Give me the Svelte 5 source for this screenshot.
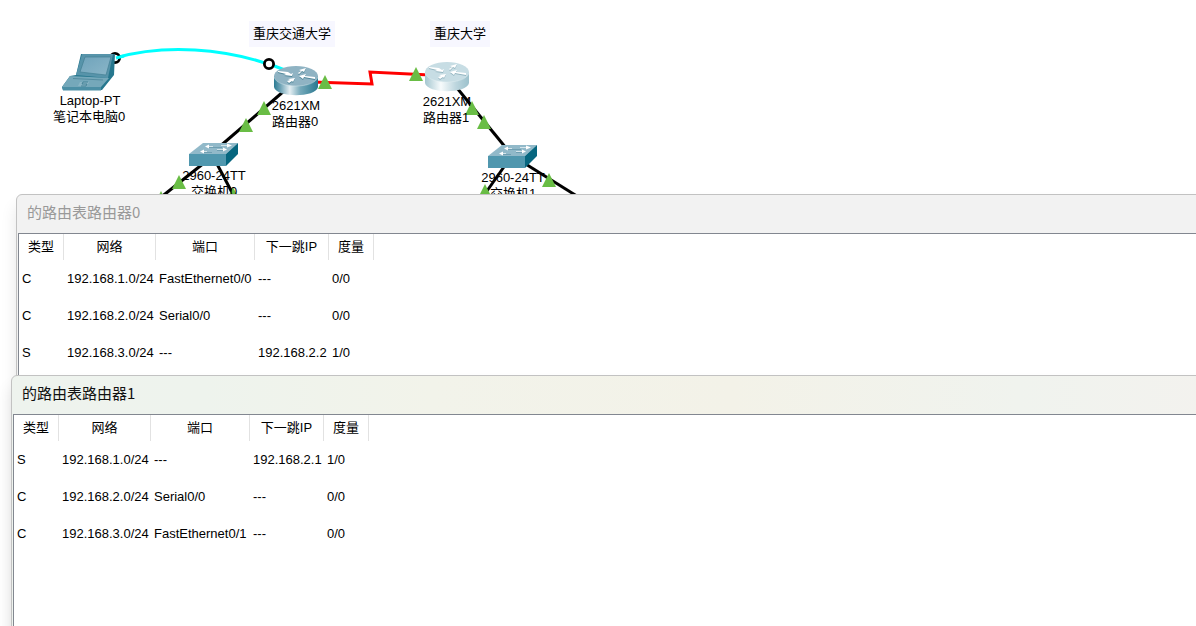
<script>
  const columns = ['类型', '网络', '端口', '下一跳IP', '度量'];

  const windows = [
    {
      id: 'router0',
      title: '的路由表路由器0',
      active: false,
      rows: [
        ['C', '192.168.1.0/24', 'FastEthernet0/0', '---', '0/0'],
        ['C', '192.168.2.0/24', 'Serial0/0', '---', '0/0'],
        ['S', '192.168.3.0/24', '---', '192.168.2.2', '1/0'],
      ],
    },
    {
      id: 'router1',
      title: '的路由表路由器1',
      active: true,
      rows: [
        ['S', '192.168.1.0/24', '---', '192.168.2.1', '1/0'],
        ['C', '192.168.2.0/24', 'Serial0/0', '---', '0/0'],
        ['C', '192.168.3.0/24', 'FastEthernet0/1', '---', '0/0'],
      ],
    },
  ];

  // Black copper links between devices: x1, y1, x2, y2
  const links = [
    [284, 91, 218, 148],
    [457, 88, 506, 148],
    [204, 163, 160, 198],
    [217, 164, 236, 200],
    [506, 164, 482, 198],
    [524, 163, 580, 198],
  ];

  // Apex of each link status arrow
  const arrows = [
    [325, 75], [416, 67], [264, 101], [246, 118], [472, 101], [484, 115],
    [179, 175], [161, 191], [233, 187], [485, 184], [549, 173],
  ];

  const routers = [
    { x: 296, y: 75, top: '#8fb3c3', body: 'url(#steel)', shade: '#4f8699', name: '路由器0' },
    { x: 447, y: 71, top: '#c7dde4', body: 'url(#pale)', shade: '#93b5c0', name: '路由器1' },
  ];

  const routerArrows =
    'M-18-5 L-8-4 L-5-2 L-3-3 L-4 0 L-12-1 L-10-2 L-18-4Z ' +
    'M2-3 L5-5 L3-6 L10-8 L8-4 L6-5 L3-2Z ' +
    'M3 0 L10-2 L9 0 L19 1 L19 3 L8 1 L7 3Z ' +
    'M-9 5 L-6 4 L-8 3 L-1 2 L-3 6 L-4 5 L-7 7Z';

  const switches = [
    { x: 189, y: 143, name: '交换机0' },
    { x: 488, y: 145, name: '交换机1' },
  ];

  const notes = [
    { x: 249, width: 86, text: '重庆交通大学' },
    { x: 430, width: 60, text: '重庆大学' },
  ];
</script>

<main class="desktop">
  <svg class="topology" width="1196" height="220" viewBox="0 0 1196 220" role="group">
    <defs>
      <linearGradient id="steel">
        <stop offset="0" stop-color="#2b7b93" />
        <stop offset=".14" stop-color="#6ba1b4" />
        <stop offset=".36" stop-color="#e4eef2" />
        <stop offset=".6" stop-color="#75a9ba" />
        <stop offset="1" stop-color="#2a7890" />
      </linearGradient>
      <linearGradient id="pale">
        <stop offset="0" stop-color="#a4c6d0" />
        <stop offset=".36" stop-color="#f7fbfc" />
        <stop offset=".7" stop-color="#bdd6de" />
        <stop offset="1" stop-color="#9cc1cc" />
      </linearGradient>
      <linearGradient id="screen" x1="0" y1="0" x2="1" y2="1">
        <stop offset="0" stop-color="#6fa3bb" />
        <stop offset="1" stop-color="#8bb6c8" />
      </linearGradient>
    </defs>

    {#each notes as note}
      <rect x={note.x} y="21" width={note.width} height="26" fill="#f7f7ff" />
      <text x={note.x + note.width / 2} y="38">{note.text}</text>
    {/each}

    {#each links as [x1, y1, x2, y2]}
      <line {x1} {y1} {x2} {y2} stroke="#000" stroke-width="3" />
    {/each}
    <path d="M312 82 L372 84 L370 72 L430 75" fill="none" stroke="#f00" stroke-width="3" />
    <path d="M115 58 C160 45 225 45 290 72" fill="none" stroke="#0ff" stroke-width="3" />
    <circle cx="115" cy="58" r="4.6" fill="#fff" stroke="#000" stroke-width="2.8" />
    <path d="M116 58 L124 56" stroke="#0ff" stroke-width="3" />
    <circle cx="269" cy="64" r="4.6" fill="#fff" stroke="#000" stroke-width="2.8" />

    <g>
      <path d="M81 54 L115 54 L114 75 L102 90 L63 90 L62 87 L70 76 L76 75Z" fill="#26778e" />
      <path d="M82 54 L113 54 L108 78 L76 75Z" fill="#5794aa" />
      <path d="M85 57 L111 57 L106 75 L80 72Z" fill="url(#screen)" stroke="#437f94" stroke-width=".7" />
      <path d="M70 76 L109 78 L101 87 L62 87Z" fill="#75a8ba" />
      <path d="M62 87 H101 V90.5 H63Z" fill="#4c8fa5" />
      <path d="M73 78.5 L103 80" fill="none" stroke="#548ca0" stroke-width="1" />
      <path d="M80 82 h9 l-2 4 h-9Z" fill="#8ab5c5" />
      <path d="M88 82 h-5 l-1 2 h5 l-1 2 h-5" fill="none" stroke="#3f7f93" stroke-width=".9" />
    </g>

    {#each routers as router}
      <g transform="translate({router.x} {router.y})">
        <path d="M-22 1 V12 C-20 23 20 23 22 12 V1Z" fill={router.body} />
        <ellipse cy="1" rx="22" ry="10" fill={router.top} />
        <path d="M-22 2 C-19 14 19 14 22 2" fill="none" stroke="#e5f0f3" stroke-width=".7" opacity=".6" />
        <path d={routerArrows} transform="translate(0 2)" fill={router.shade} />
        <path d={routerArrows} transform="translate(0 1)" fill="#fff" />
      </g>
    {/each}

    {#each switches as sw}
      <g transform="translate({sw.x} {sw.y})">
        <path d="M0 11 L14 0 H49 L37 11Z" fill="#91b9c9" />
        <path d="M0 11 H37 V23 H0Z" fill="#5097ae" />
        <path d="M37 11 L49 0 V11 L37 23Z" fill="#06667f" />
        <path d="M20 4.5 H33 M28 7.5 H36 M14 9.5 H23" stroke="#6f9fb2" />
        <path d="M20 3.5 H24 M32 2.5 H38 M15 8.5 H18 M28 6.5 H34" stroke="#d5e5eb" />
        <g fill="#fff">
          <path d="M16 3.5 L20 1.5 V5.5Z" />
          <path d="M43 2.5 L38 0.5 V4.5Z" />
          <path d="M11 8.5 L15 6.5 V10.5Z" />
          <path d="M38 6.5 L34 4.5 V8.5Z" />
        </g>
      </g>
    {/each}

    {#each arrows as [x, y]}
      <path d="M{x} {y} l7 14 h-14Z" fill="#69bd45" />
    {/each}

    <text x="90" y="105">Laptop-PT</text>
    <text x="89" y="121">笔记本电脑0</text>
    {#each routers as router}
      <text x={router.x} y={router.y + 35}>2621XM</text>
      <text x={router.x - 1} y={router.y + 51}>{router.name}</text>
    {/each}
    {#each switches as sw}
      <text x={sw.x + 25} y={sw.y + 37}>2960-24TT</text>
      <text x={sw.x + 25} y={sw.y + 53}>{sw.name}</text>
    {/each}
  </svg>

  {#each windows as win}
    <section class="window {win.id}" class:active={win.active} aria-labelledby="{win.id}-title">
      <h2 id="{win.id}-title">{win.title}</h2>
      <div class="frame">
        <table>
          <colgroup>
            <col class="narrow" />
            <col class="network" />
            <col class="port" />
            <col class="hop" />
            <col class="narrow" />
          </colgroup>
          <thead>
            <tr>
              {#each columns as column}<th scope="col">{column}</th>{/each}
            </tr>
          </thead>
          <tbody>
            {#each win.rows as row}
              <tr>
                {#each row as cell}<td>{cell}</td>{/each}
              </tr>
            {/each}
          </tbody>
        </table>
      </div>
    </section>
  {/each}
</main>

<style>
  .desktop {
    position: relative;
    height: 100vh;
    overflow: hidden;
    background: #fff;
    color: #000;
    font: 13px/16px "Liberation Sans", "Noto Sans CJK SC", sans-serif;
  }

  .topology {
    display: block;
  }

  .topology text {
    text-anchor: middle;
  }

  .window {
    position: absolute;
    right: -16px;
    bottom: -16px;
    box-sizing: border-box;
    display: flex;
    flex-direction: column;
    padding-left: 1px;
    border: 1px solid #c2c2c2;
    border-radius: 6px 6px 0 0;
    background: #f2f2f2;
    box-shadow: 0 12px 16px rgba(0, 0, 0, 0.1);
  }

  .router0 {
    left: 16px;
    top: 194px;
  }

  .router1 {
    left: 11px;
    top: 375px;
  }

  .active {
    background: linear-gradient(90deg, #eef3ee, #eef3ed 16%, #f2f3ea 35%, #f3f2e8 60%, #f0f3ee 84%, #f3f2ee);
  }

  h2 {
    margin: 0;
    padding: 0 9px 4px;
    font: 15px/34px "Noto Sans CJK SC", sans-serif;
    color: #999;
  }

  .active h2 {
    color: #111;
  }

  .frame {
    flex: 1;
    border: 1px solid #828790;
    background: #fff;
  }

  table {
    table-layout: fixed;
    width: 355px;
    border-collapse: separate;
    border-spacing: 0;
  }

  .narrow {
    width: 45px;
  }

  .network {
    width: 92px;
  }

  .port {
    width: 99px;
  }

  .hop {
    width: 74px;
  }

  th {
    height: 26px;
    padding: 0;
    border-right: 1px solid #e2e2e2;
    font-weight: normal;
    text-align: center;
  }

  td {
    height: 37px;
    padding: 0 0 0 3px;
    white-space: nowrap;
  }
</style>
